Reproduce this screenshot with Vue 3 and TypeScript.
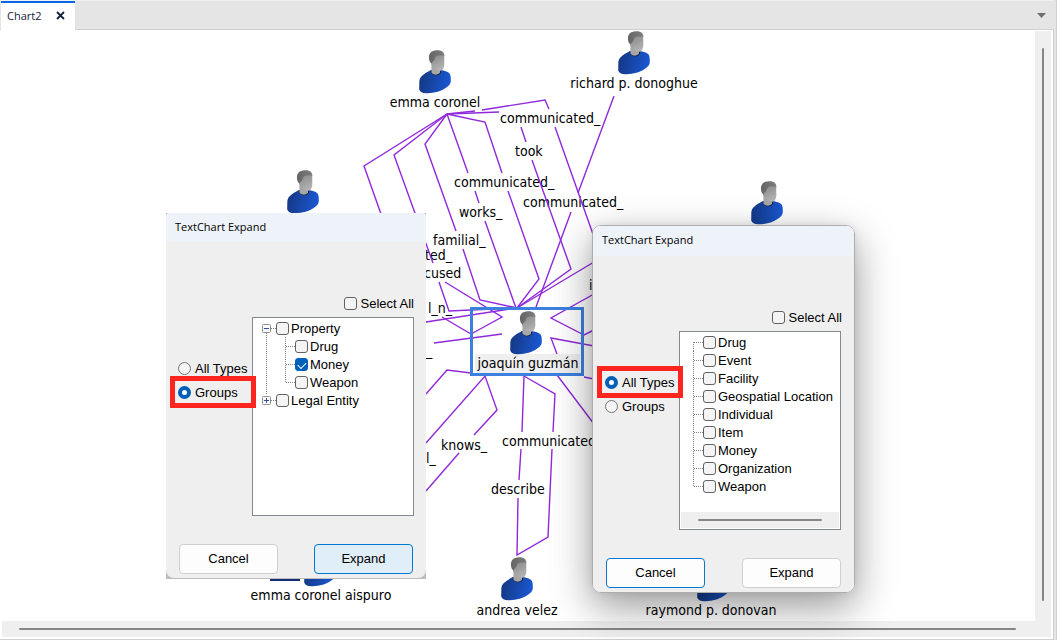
<script setup lang="ts">
import { reactive } from 'vue'

type Guide = 'start' | 'tee' | 'end' | 'line' | 'minus' | 'plus'

interface TreeRow {
  label: string
  checked: boolean
  guides: Guide[]
}

interface ExpandDialog {
  id: string
  mode: 'all' | 'groups'
  selectAll: boolean
  primary: 'cancel' | 'expand'
  scroll: boolean
  rows: TreeRow[]
}

interface Point {
  x: number
  y: number
}

interface Label extends Point {
  text: string
}

const guidePaths: Record<Guide, string> = {
  start: 'M9.5 9V18M10 9.5H19',
  tee: 'M9.5 0V18M10 9.5H19',
  end: 'M9.5 0V10M10 9.5H19',
  line: 'M9.5 0V18',
  minus: 'M9.5 14V18M14 9.5H19',
  plus: 'M9.5 0V4M14 9.5H19',
}

const typeNames = ['Drug', 'Event', 'Facility', 'Geospatial Location', 'Individual', 'Item', 'Money', 'Organization', 'Weapon']

const dialogs = reactive<ExpandDialog[]>([
  {
    id: 'groups',
    mode: 'groups',
    selectAll: false,
    primary: 'expand',
    scroll: false,
    rows: [
      { label: 'Property', checked: false, guides: ['minus'] },
      { label: 'Drug', checked: false, guides: ['line', 'tee'] },
      { label: 'Money', checked: true, guides: ['line', 'tee'] },
      { label: 'Weapon', checked: false, guides: ['line', 'end'] },
      { label: 'Legal Entity', checked: false, guides: ['plus'] },
    ],
  },
  {
    id: 'types',
    mode: 'all',
    selectAll: false,
    primary: 'cancel',
    scroll: true,
    rows: typeNames.map((label, i) => ({
      label,
      checked: false,
      guides: [i === 0 ? 'start' : i === typeNames.length - 1 ? 'end' : 'tee'] as Guide[],
    })),
  },
])

const people: Point[] = [
  { x: 419, y: 50 },
  { x: 618, y: 31 },
  { x: 287, y: 170 },
  { x: 751, y: 181 },
  { x: 510, y: 311 },
  { x: 501, y: 557 },
  { x: 697, y: 558 },
  { x: 304, y: 543 },
]

const nodeLabels: Label[] = [
  { text: 'emma coronel', x: 435, y: 107 },
  { text: 'richard p. donoghue', x: 634, y: 88 },
  { text: 'joaquín guzmán', x: 528, y: 368 },
  { text: 'emma coronel aispuro', x: 321, y: 600 },
  { text: 'andrea velez', x: 517, y: 615 },
  { text: 'raymond p. donovan', x: 711, y: 615 },
]

const linkLabels: Label[] = [
  { text: 'communicated_', x: 500, y: 123 },
  { text: 'took', x: 515, y: 156 },
  { text: 'communicated_', x: 454, y: 187 },
  { text: 'communicated_', x: 523, y: 207 },
  { text: 'works_', x: 459, y: 217 },
  { text: 'familial_', x: 433, y: 245 },
  { text: 'ted_', x: 425, y: 260 },
  { text: 'cused', x: 424, y: 278 },
  { text: 'l_n_', x: 428, y: 313 },
  { text: '_', x: 426, y: 356 },
  { text: 'knows_', x: 441, y: 450 },
  { text: 'l_', x: 426, y: 463 },
  { text: 'communicated_', x: 502, y: 446 },
  { text: 'describe', x: 491, y: 494 },
  { text: 'i', x: 589, y: 290 },
]

const links: string[] = [
  'M447 114L364 166L381 214',
  'M447 114L394 155L433 263M439 282L449 311L517 308',
  'M447 114L425 144L456 231M463 249L480 300L517 308',
  'M447 114L468 173M475 191L479 203M485 221L516 308',
  'M447 114L485 122L502 173M508 191L539 279L517 308',
  'M447 114L499 112M521 127L526 142M532 160L571 269L517 308',
  'M447 114L475 111M482 110L545 100L549 109M555 127L594 237',
  'M614 96L578 193M571 212L536 307',
  'M517 308L594 262',
  'M426 322L517 308',
  'M445 282L502 317L471 334L442 317',
  'M434 343L502 334',
  'M594 294L551 318L584 335L594 330',
  'M594 346L551 338L557 354',
  'M426 394L447 370L471 373',
  'M426 443L485 376L497 410L474 435',
  'M459 453L426 491',
  'M524 376L522 432M521 449L519 480M518 498L517 555L548 537L552 449',
  'M524 376L555 394L553 432',
  'M557 375L594 424',
  'M584 377L594 379',
]
</script>

<template>
  <div class="window">
    <header class="tabs">
      <div class="tab">
        <span>Chart2</span>
        <button type="button" class="icon-button" aria-label="Close Chart2">
          <svg width="9" height="9" viewBox="0 0 9 9"><path d="M1 1L8 8M8 1L1 8" stroke="#14213d" stroke-width="1.8" /></svg>
        </button>
      </div>
      <button type="button" class="icon-button tab-menu" aria-label="Open charts">
        <svg width="9" height="5" viewBox="0 0 9 5"><path d="M0 0H9L4.5 5Z" fill="#6f6f6f" /></svg>
      </button>
    </header>

    <main class="workspace">
      <div class="canvas">
        <svg class="chart" width="1033" height="590" viewBox="2 31 1033 590" role="img" aria-label="Link chart">
          <defs>
            <linearGradient id="shirt" x1="0" y1="0" x2="1" y2="0.15">
              <stop offset="0" stop-color="#14367f" />
              <stop offset="1" stop-color="#1a56d0" />
            </linearGradient>
            <linearGradient id="face" x1="0" y1="0" x2="0.4" y2="1">
              <stop offset="0" stop-color="#858585" />
              <stop offset="1" stop-color="#b2b2b2" />
            </linearGradient>
            <linearGradient id="hair" x1="0" y1="0" x2="1" y2="0">
              <stop offset="0" stop-color="#646464" />
              <stop offset="1" stop-color="#7d7d7d" />
            </linearGradient>
            <g id="person">
              <path d="M11.5 20.3C9 21.5 5 24 2.4 26.5C0.8 28 0.3 30 0.3 33L0.2 39.5C0.8 42 3.5 43 7 43.2C14 43.6 22 41.5 27 37.8C30 35.8 31.7 34 31.8 31C31.9 27.5 31.6 25 30.6 23.6C29 21.6 25.5 20.6 21 19.8Z" fill="url(#shirt)" />
              <path d="M11.5 20.3L12.2 23C14.5 26.3 20 26 22 22.8V20Z" fill="#12213f" />
              <path d="M12.4 11V22.4C14.5 25.3 19 25.3 21 22.8V16Z" fill="#a6a6a6" />
              <path d="M11.8 6L25.2 4.5L25.3 14C25.1 18 23.8 20.6 21.4 20.8C18 20.9 14.2 18 12.4 14Z" fill="url(#face)" />
              <path d="M10 8.5C9.4 3.5 12.5 0.3 17.8 0.2C22.5 0.1 25.2 1.8 25.4 5.8C22.5 5.3 18.5 5.4 16.8 6.6C15.6 7.8 16 10.6 13.6 11.4L12.8 13.4C11 12.8 10.2 11 10 8.5Z" fill="url(#hair)" />
            </g>
          </defs>

          <rect x="475" y="354" width="105" height="19" fill="#efefef" />
          <text v-for="(l, i) in linkLabels" :key="'t' + i" class="label" :x="l.x" :y="l.y">{{ l.text }}</text>
          <path v-for="(d, i) in links" :key="'l' + i" class="link" :d="d" />
          <use v-for="(p, i) in people" :key="'p' + i" href="#person" :x="p.x" :y="p.y" />
          <text v-for="l in nodeLabels" :key="l.text" class="label node-label" :x="l.x" :y="l.y">{{ l.text }}</text>
          <rect x="270" y="572" width="30" height="9" fill="#152c72" />
          <rect x="471.5" y="308.5" width="111" height="66" fill="none" stroke="#3c80e0" stroke-width="3" />
        </svg>
      </div>
      <div class="track vertical"><div class="thumb"></div></div>
      <div class="track horizontal"><div class="thumb"></div></div>
    </main>

    <section v-for="d in dialogs" :key="d.id" class="frame" :class="d.id" role="dialog" aria-label="TextChart Expand">
      <form class="dialog" @submit.prevent>
        <h2 class="title">TextChart Expand</h2>
        <label class="option select-all"><input v-model="d.selectAll" type="checkbox" class="check" />Select All</label>
        <div class="choices">
          <div class="modes">
            <label class="option mode" :class="{ marked: d.mode === 'all' }">
              <input v-model="d.mode" type="radio" class="radio" :name="'mode-' + d.id" value="all" />All Types
            </label>
            <label class="option mode" :class="{ marked: d.mode === 'groups' }">
              <input v-model="d.mode" type="radio" class="radio" :name="'mode-' + d.id" value="groups" />Groups
            </label>
          </div>
          <div class="tree">
            <ul class="rows">
              <li v-for="row in d.rows" :key="row.label" class="row">
                <svg v-for="(g, gi) in row.guides" :key="gi" class="guide" width="19" height="18" viewBox="0 0 19 18">
                  <path :d="guidePaths[g]" stroke="#808080" stroke-dasharray="1 1" fill="none" />
                  <g v-if="g === 'minus' || g === 'plus'">
                    <rect x="5.5" y="5.5" width="8" height="8" rx="1" fill="#fafafa" stroke="#919191" />
                    <path :d="g === 'plus' ? 'M7 9.5H12M9.5 7V12' : 'M7 9.5H12'" stroke="#2f4f9f" />
                  </g>
                </svg>
                <label class="item"><input v-model="row.checked" type="checkbox" class="check" />{{ row.label }}</label>
              </li>
            </ul>
            <div v-if="d.scroll" class="track tree-track"><div class="thumb"></div></div>
          </div>
        </div>
        <div class="buttons">
          <button type="button" class="push" :class="{ focused: d.primary === 'cancel' }">Cancel</button>
          <button type="button" class="push" :class="{ focused: d.primary === 'expand', hot: d.primary === 'expand' }">Expand</button>
        </div>
      </form>
    </section>
  </div>
</template>

<style>
body {
  margin: 0;
}
</style>

<style scoped>
* {
  box-sizing: border-box;
}

.window {
  position: relative;
  display: flex;
  flex-direction: column;
  height: 100vh;
  overflow: hidden;
  padding-right: 2px;
  border-right: 1px solid #d0d0d0;
  background: #e5e5e5;
  font-family: "Liberation Sans", Arial, sans-serif;
  font-size: 13px;
  color: #000;
}

.tabs {
  display: flex;
  align-items: stretch;
  justify-content: space-between;
  height: 30px;
  padding: 0 8px 0 1px;
  border-top: 1px solid #f0f0f0;
  box-shadow: inset 0 -1px #d0d0d0;
}

.tab {
  display: flex;
  align-items: center;
  gap: 14px;
  padding: 0 10px 2px 6px;
  border-top: 2px solid #0a66e8;
  background: #fff;
  font-family: "Open Sans", "Noto Sans", sans-serif;
  font-size: 11px;
  color: #14213d;
}

.icon-button {
  display: flex;
  align-items: center;
  padding: 0;
  border: 0;
  background: none;
}

.workspace {
  flex: 1;
  min-height: 0;
  display: grid;
  grid-template-columns: minmax(0, 1fr) 16px;
  grid-template-rows: minmax(0, 1fr) 16px;
  padding: 1px 2px 2px;
  border-right: 1px solid #d0d0d0;
  border-bottom: 1px solid #d0d0d0;
  background: #fff;
}

.canvas {
  overflow: hidden;
}

.chart {
  display: block;
}

.label {
  font-family: "DejaVu Sans Condensed", "DejaVu Sans", sans-serif;
  font-size: 14px;
  fill: #000;
}

.node-label {
  text-anchor: middle;
}

.link {
  fill: none;
  stroke: #9128dc;
  stroke-width: 1.4;
}

.track {
  display: flex;
  align-items: center;
  justify-content: center;
  background: #efefef;
}

.thumb {
  border-radius: 1px;
  background: #868686;
}

.vertical {
  padding: 17px 0 20px;
}

.vertical .thumb {
  width: 2px;
  height: 100%;
}

.horizontal {
  grid-column: 1 / 3;
  padding: 0 35px 0 17px;
}

.horizontal .thumb,
.tree-track .thumb {
  width: 100%;
  height: 2px;
}

.frame {
  position: absolute;
}

.groups {
  left: 166px;
  top: 213px;
  padding-bottom: 1px;
  background: #bdbdbd;
}

.types {
  left: 592px;
  top: 225px;
  border: 1px solid #adadad;
  border-radius: 9px;
  box-shadow: 0 14px 40px rgba(0, 0, 0, 0.4), 0 0 10px rgba(0, 0, 0, 0.08);
}

.dialog {
  display: flex;
  flex-direction: column;
  width: 260px;
  overflow: hidden;
  border-radius: 8px;
  background: #efefef;
}

.groups .dialog {
  border-radius: 4px 4px 8px 8px;
}

.types .dialog {
  width: 261px;
}

.title {
  margin: 0 0 54px;
  padding: 0 9px 2px;
  background: #eef2f9;
  font-family: "Open Sans", "Noto Sans", sans-serif;
  font-size: 11px;
  font-weight: 400;
  line-height: 27px;
}

.types .title {
  line-height: 28px;
}

.option {
  display: flex;
  align-items: center;
  gap: 4px;
  white-space: nowrap;
}

.select-all {
  align-self: flex-end;
  height: 14px;
  margin: 0 12px 7px;
}

.choices {
  display: grid;
  grid-template-columns: 86px 162px;
}

.modes {
  padding: 39px 0 0 12px;
}

.mode {
  position: relative;
  height: 24px;
}

.marked::after {
  content: "";
  position: absolute;
  z-index: 1;
  inset: -4px -4px -4px -8px;
  border: 5px solid #fd251e;
}

.check,
.radio {
  appearance: none;
  flex: none;
  width: 13px;
  height: 13px;
  margin: 0;
  border: 1px solid #626262;
  background: #f4f4f4;
}

.check {
  border-radius: 3px;
}

.check:checked {
  border-color: #005fb8;
  background: #005fb8;
}

.check:checked::before {
  content: "";
  display: block;
  width: 7px;
  height: 4px;
  margin: 3px 0 0 2px;
  border: solid #fff;
  border-width: 0 0 1px 1px;
  transform: rotate(-45deg);
}

.radio {
  border-color: #757575;
  border-radius: 50%;
}

.radio:checked {
  border: 4px solid #005fb8;
  background: #fff;
}

.tree {
  display: flex;
  flex-direction: column;
  justify-content: space-between;
  height: 199px;
  padding: 1px;
  border: 1px solid #828790;
  background: #fff;
}

.rows {
  margin: 0;
  padding: 0 0 0 3px;
  list-style: none;
}

.row {
  display: flex;
  height: 18px;
}

.guide {
  flex: none;
}

.item {
  display: flex;
  align-items: center;
  gap: 2px;
  white-space: nowrap;
}

.tree-track {
  height: 16px;
  padding: 0 17px;
}

.buttons {
  display: flex;
  justify-content: space-between;
  padding: 28px 13px 4px;
}

.push {
  width: 99px;
  height: 30px;
  padding: 0 0 2px;
  border: 1px solid #d0d0d0;
  border-radius: 4px;
  background: #fdfdfd;
  font: inherit;
  color: inherit;
}

.focused {
  border-color: #0078d4;
}

.hot {
  background: #e0eef9;
}
</style>
